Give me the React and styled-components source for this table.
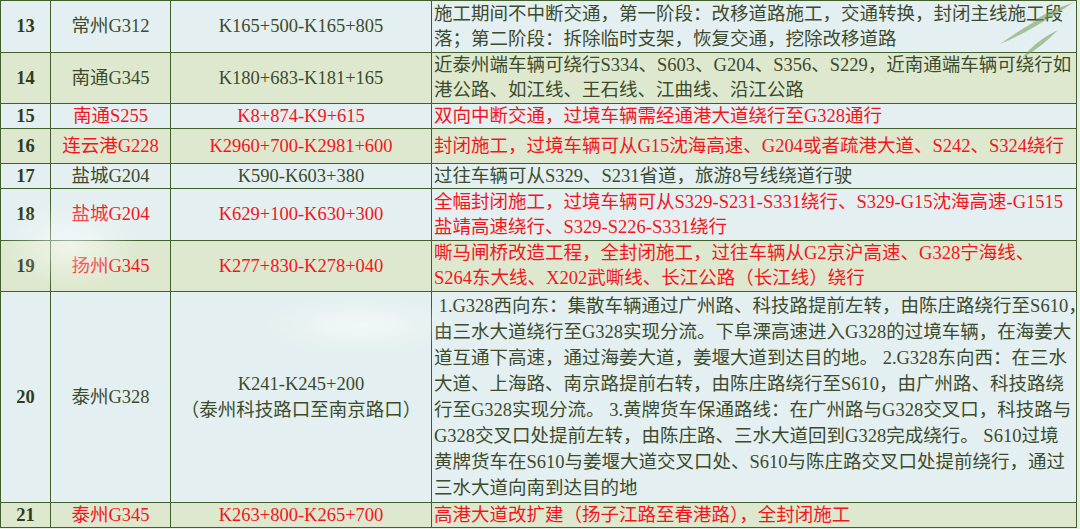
import React from 'react';
import styled, { createGlobalStyle } from 'styled-components';

const GlobalStyle = createGlobalStyle`
    html, body {
        margin: 0;
        padding: 0;
        background-color: #e6efe2;
    }
    body {
        font-family: "Liberation Serif", "Noto Sans CJK SC", serif;
    }
`

const Page = styled.div`
    position: relative;
    width: 1080px;
    height: 529px;
    overflow: hidden;
`

const Table = styled.table`
    width: 1076px;
    border-collapse: collapse;
    table-layout: fixed;
    font-size: 18.5px;
    color: #3d4b2c;
`

const Row = styled.tr`
    height: ${({ $h }) => $h}px;
    line-height: ${({ $lh }) => $lh || 24}px;
    background-color: ${({ $green }) => ($green ? '#dde8cf' : '#e3eff0')};
`

const Cell = styled.td`
    border: 1.5px solid #405f2c;
    padding: 0 2px;
    vertical-align: middle;
    text-align: ${({ $left }) => ($left ? 'left' : 'center')};
    color: ${({ $red }) => ($red ? '#f2161c' : '#3d4b2c')};
    white-space: nowrap;
    overflow: visible;
`

const Num = styled.td`
    border: 1.5px solid #405f2c;
    padding: 0;
    text-align: center;
    vertical-align: middle;
    font-weight: bold;
    color: #2f3c20;
`

const Line = styled.div`
    white-space: nowrap;
`

const Decor = styled.svg`
    position: absolute;
    top: 0;
    right: 0;
    pointer-events: none;
`

const Cloud = styled.div`
    position: absolute;
    left: ${({ $x }) => $x}px;
    top: ${({ $y }) => $y}px;
    width: ${({ $w }) => $w}px;
    height: ${({ $hh }) => $hh}px;
    border-radius: 50%;
    background: radial-gradient(ellipse at center, rgba(255,255,255,0.55) 0%, rgba(255,255,255,0) 70%);
    pointer-events: none;
`

const rows = [
    {
        no: 13, h: 52, lh: 25, road: '常州G312', km: ['K165+500-K165+805'],
        desc: ['施工期间不中断交通，第一阶段：改移道路施工，交通转换，封闭主线施工段', '落；第二阶段：拆除临时支架，恢复交通，挖除改移道路'],
    },
    {
        no: 14, h: 51, lh: 25, green: true, road: '南通G345', km: ['K180+683-K181+165'],
        desc: ['近泰州端车辆可绕行S334、S603、G204、S356、S229，近南通端车辆可绕行如', '港公路、如江线、王石线、江曲线、沿江公路'],
    },
    {
        no: 15, h: 25, red: true, road: '南通S255', km: ['K8+874-K9+615'],
        desc: ['双向中断交通，过境车辆需经通港大道绕行至G328通行'],
    },
    {
        no: 16, h: 35, green: true, red: true, road: '连云港G228', km: ['K2960+700-K2981+600'],
        desc: ['封闭施工，过境车辆可从G15沈海高速、G204或者疏港大道、S242、S324绕行'],
    },
    {
        no: 17, h: 25, road: '盐城G204', km: ['K590-K603+380'],
        desc: ['过往车辆可从S329、S231省道，旅游8号线绕道行驶'],
    },
    {
        no: 18, h: 52, lh: 25, red: true, road: '盐城G204', km: ['K629+100-K630+300'],
        desc: ['全幅封闭施工，过境车辆可从S329-S231-S331绕行、S329-G15沈海高速-G1515', '盐靖高速绕行、S329-S226-S331绕行'],
    },
    {
        no: 19, h: 51, lh: 25, green: true, red: true, road: '扬州G345', km: ['K277+830-K278+040'],
        desc: ['嘶马闸桥改造工程，全封闭施工，过往车辆从G2京沪高速、G328宁海线、', 'S264东大线、X202武嘶线、长江公路（长江线）绕行'],
    },
    {
        no: 20, h: 211, lh: 26, road: '泰州G328', km: ['K241-K245+200', '（泰州科技路口至南京路口）'],
        desc: [
            '\u00a01.G328西向东：集散车辆通过广州路、科技路提前左转，由陈庄路绕行至S610，',
            '由三水大道绕行至G328实现分流。下阜溧高速进入G328的过境车辆，在海姜大',
            '道互通下高速，通过海姜大道，姜堰大道到达目的地。 2.G328东向西：在三水',
            '大道、上海路、南京路提前右转，由陈庄路绕行至S610，由广州路、科技路绕',
            '行至G328实现分流。 3.黄牌货车保通路线：在广州路与G328交叉口，科技路与',
            'G328交叉口处提前左转，由陈庄路、三水大道回到G328完成绕行。 S610过境',
            '黄牌货车在S610与姜堰大道交叉口处、S610与陈庄路交叉口处提前绕行，通过',
            '三水大道向南到达目的地',
        ],
    },
    {
        no: 21, h: 25, green: true, red: true, road: '泰州G345', km: ['K263+800-K265+700'],
        desc: ['高港大道改扩建（扬子江路至春港路），全封闭施工'],
    },
];

function Leaves() {
    return (
        <Decor width="110" height="70" viewBox="0 0 110 70">
            <g fill="#6f9a55" opacity="0.55">
                <path d="M30 44 C50 30, 75 14, 104 2 C80 18, 58 32, 30 44 Z" />
                <path d="M52 58 C62 46, 72 38, 88 30 C76 42, 66 50, 52 58 Z" />
                <path d="M62 22 C74 14, 86 8, 100 4 C88 12, 76 18, 62 22 Z" />
            </g>
        </Decor>
    );
}

function App() {
    return (
        <Page>
            <GlobalStyle />
            <Table>
                <colgroup>
                    <col style={{ width: 50 }} />
                    <col style={{ width: 120 }} />
                    <col style={{ width: 261 }} />
                    <col style={{ width: 645 }} />
                </colgroup>
                <tbody>
                    {rows.map((r) => (
                        <Row key={r.no} $h={r.h} $lh={r.lh} $green={r.green}>
                            <Num>{r.no}</Num>
                            <Cell $red={r.red}>{r.road}</Cell>
                            <Cell $red={r.red}>
                                {r.km.map((k) => <Line key={k}>{k}</Line>)}
                            </Cell>
                            <Cell $left $red={r.red}>
                                {r.desc.map((d, i) => <Line key={i}>{d}</Line>)}
                            </Cell>
                        </Row>
                    ))}
                </tbody>
            </Table>
            <Cloud $x={0} $y={200} $w={140} $hh={90} />
            <Cloud $x={260} $y={295} $w={200} $hh={60} />
            <Leaves />
        </Page>
    );
}

export default App;
